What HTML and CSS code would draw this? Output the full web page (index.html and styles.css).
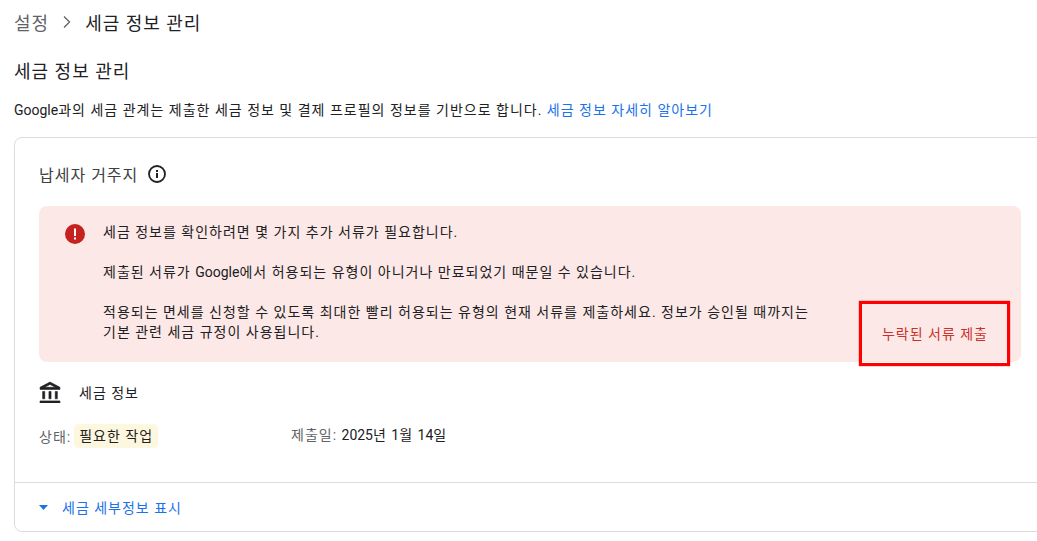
FILE: index.html
```html
<!DOCTYPE html>
<html lang="ko">
<head>
    <meta charset="UTF-8">
    <meta name="viewport" content="width=device-width, initial-scale=1.0">
    <title>세금 정보 관리</title>
    <link rel="stylesheet" href="styles.css">
</head>
<body>
    <nav class="breadcrumb">
        <span class="crumb-parent">설정</span>
        <svg class="crumb-sep" width="12" height="14" viewBox="0 0 12 14"><path d="M3 1.500 8.500 7 3 12.500" fill="none" stroke="#5f6368" stroke-width="1.300"/></svg>
        <span class="crumb-current">세금 정보 관리</span>
    </nav>

    <h1 class="page-title">세금 정보 관리</h1>
    <p class="intro"><span class="latin">Google</span>과의 세금 관계는 제출한 세금 정보 및 결제 프로필의 정보를 기반으로 합니다. <a href="#">세금 정보 자세히 알아보기</a></p>

    <section class="card">
        <div class="card-body">
            <h2 class="card-title">납세자 거주지
                <svg class="info-icon" width="20" height="20" viewBox="0 0 20 20"><circle cx="10" cy="10" r="8" fill="none" stroke="#202124" stroke-width="1.800"/><rect x="9" y="9" width="2" height="5" fill="#202124"/><rect x="9" y="6" width="2" height="2" fill="#202124"/></svg>
            </h2>

            <div class="alert">
                <svg class="alert-icon" width="22" height="22" viewBox="0 0 22 22"><circle cx="11" cy="11" r="10" fill="#c5221f"/><rect x="10" y="5.500" width="2" height="7.500" fill="#fff"/><rect x="10" y="14.500" width="2" height="2" fill="#fff"/></svg>
                <div class="alert-text">
                    <p>세금 정보를 확인하려면 몇 가지 추가 서류가 필요합니다.</p>
                    <p>제출된 서류가 <span class="latin">Google</span>에서 허용되는 유형이 아니거나 만료되었기 때문일 수 있습니다.</p>
                    <p>적용되는 면세를 신청할 수 있도록 최대한 빨리 허용되는 유형의 현재 서류를 제출하세요. 정보가 승인될 때까지는 기본 관련 세금 규정이 사용됩니다.</p>
                </div>
                <a class="alert-action" href="#">누락된 서류 제출</a>
                <div class="highlight-box"></div>
            </div>

            <div class="tax-head">
                <svg width="22" height="22" viewBox="1 0 21 21" fill="#202124" stroke="#202124" stroke-width="0.600"><path d="M6.500 10h-2v7h2v-7zm6 0h-2v7h2v-7zm8.500 9H2v2h19v-2zm-2.500-9h-2v7h2v-7zm-7-6.740L16.710 6H6.290l5.210-2.740m0-2.260L2 6v2h19V6l-9.500-5z"/></svg>
                <span>세금 정보</span>
            </div>

            <div class="tax-meta">
                <div class="meta-status"><span class="meta-label">상태:</span><span class="chip">필요한 작업</span></div>
                <div class="meta-date"><span class="meta-label">제출일:</span> <span class="latin">2025</span>년 <span class="latin">1</span>월 <span class="latin">14</span>일</div>
            </div>
        </div>
        <div class="card-footer">
            <svg width="10" height="5" viewBox="0 0 10 5"><path d="M0 0h9L4.500 5z" fill="#1a73e8"/></svg>
            <a href="#">세금 세부정보 표시</a>
        </div>
    </section>
</body>
</html>
```

FILE: styles.css
```css
html, body {
    overflow: hidden;
}
body {
    margin: 0;
    height: 541px;
    background-color: #fff;
    color: #202124;
    font-family: Roboto, "Noto Sans CJK KR", sans-serif;
    font-size: 14px;
    letter-spacing: 1px; /* Hangul runs wider than Noto's */
}
a {
    color: #1a73e8;
    text-decoration: none;
}
.latin {
    letter-spacing: 0;
}

/* Top of page */
.breadcrumb {
    display: flex;
    align-items: center;
    height: 24px;
    margin: 10px 0 0 14px;
    font-size: 18px;
}
.crumb-parent {
    color: #5f6368;
}
.crumb-sep {
    margin: 0 12px 0 12px;
}
.page-title {
    margin: 26px 0 0 14px;
    height: 24px;
    line-height: 24px;
    font-size: 18px;
    font-weight: 400;
}
.intro {
    margin: 16px 0 0 14px;
    height: 20px;
    line-height: 20px;
}

/* Card */
.card {
    width: 1100px;
    margin: 17px 0 0 14px;
    border: 1px solid #dadce0;
    border-radius: 8px;
    box-sizing: border-box;
    height: 395px;
}
.card-body {
    height: 344px;
    padding: 24px 24px 0 24px;
    box-sizing: border-box;
}
.card-title {
    display: flex;
    align-items: center;
    gap: 9px;
    margin: 0;
    height: 24px;
    font-size: 16px;
    font-weight: 400;
    color: #3c4043;
}
.alert {
    position: relative;
    display: flex;
    width: 982px;
    height: 156px;
    margin-top: 20px;
    background-color: #fce8e6;
    border-radius: 8px;
    box-sizing: border-box;
    padding: 16px 11px 0 25px;
}
.alert-icon {
    flex: none;
    position: relative;
    top: 1px;
}
.alert-text {
    width: 712px;
    margin-left: 17px;
}
.alert-text p {
    margin: 0 0 20px;
    line-height: 20px;
}
.alert-action {
    position: absolute;
    right: 33px;
    top: 118px;
    line-height: 20px;
    color: #cc3029;
}
.highlight-box {
    position: absolute;
    left: 820px;
    top: 95px;
    width: 151px;
    height: 65px;
    border: 3px solid #f00;
    box-shadow: 0 0 1px #f00;
    box-sizing: border-box;
}
.tax-head {
    display: flex;
    align-items: center;
    gap: 18px;
    margin-top: 19px;
    height: 22px;
}
.tax-meta {
    display: flex;
    align-items: flex-start;
    margin-top: 21px;
}
.meta-status {
    display: flex;
    align-items: center;
    gap: 3px;
    width: 252px;
}
.meta-label {
    color: #5f6368;
}
.chip {
    padding: 2px 5px;
    line-height: 20px;
    background-color: #fef7e0;
    border-radius: 4px;
}
.card-footer {
    display: flex;
    align-items: center;
    gap: 13px;
    height: 49px;
    padding-left: 24px;
    border-top: 1px solid #dadce0;
    box-sizing: border-box;
}
```
